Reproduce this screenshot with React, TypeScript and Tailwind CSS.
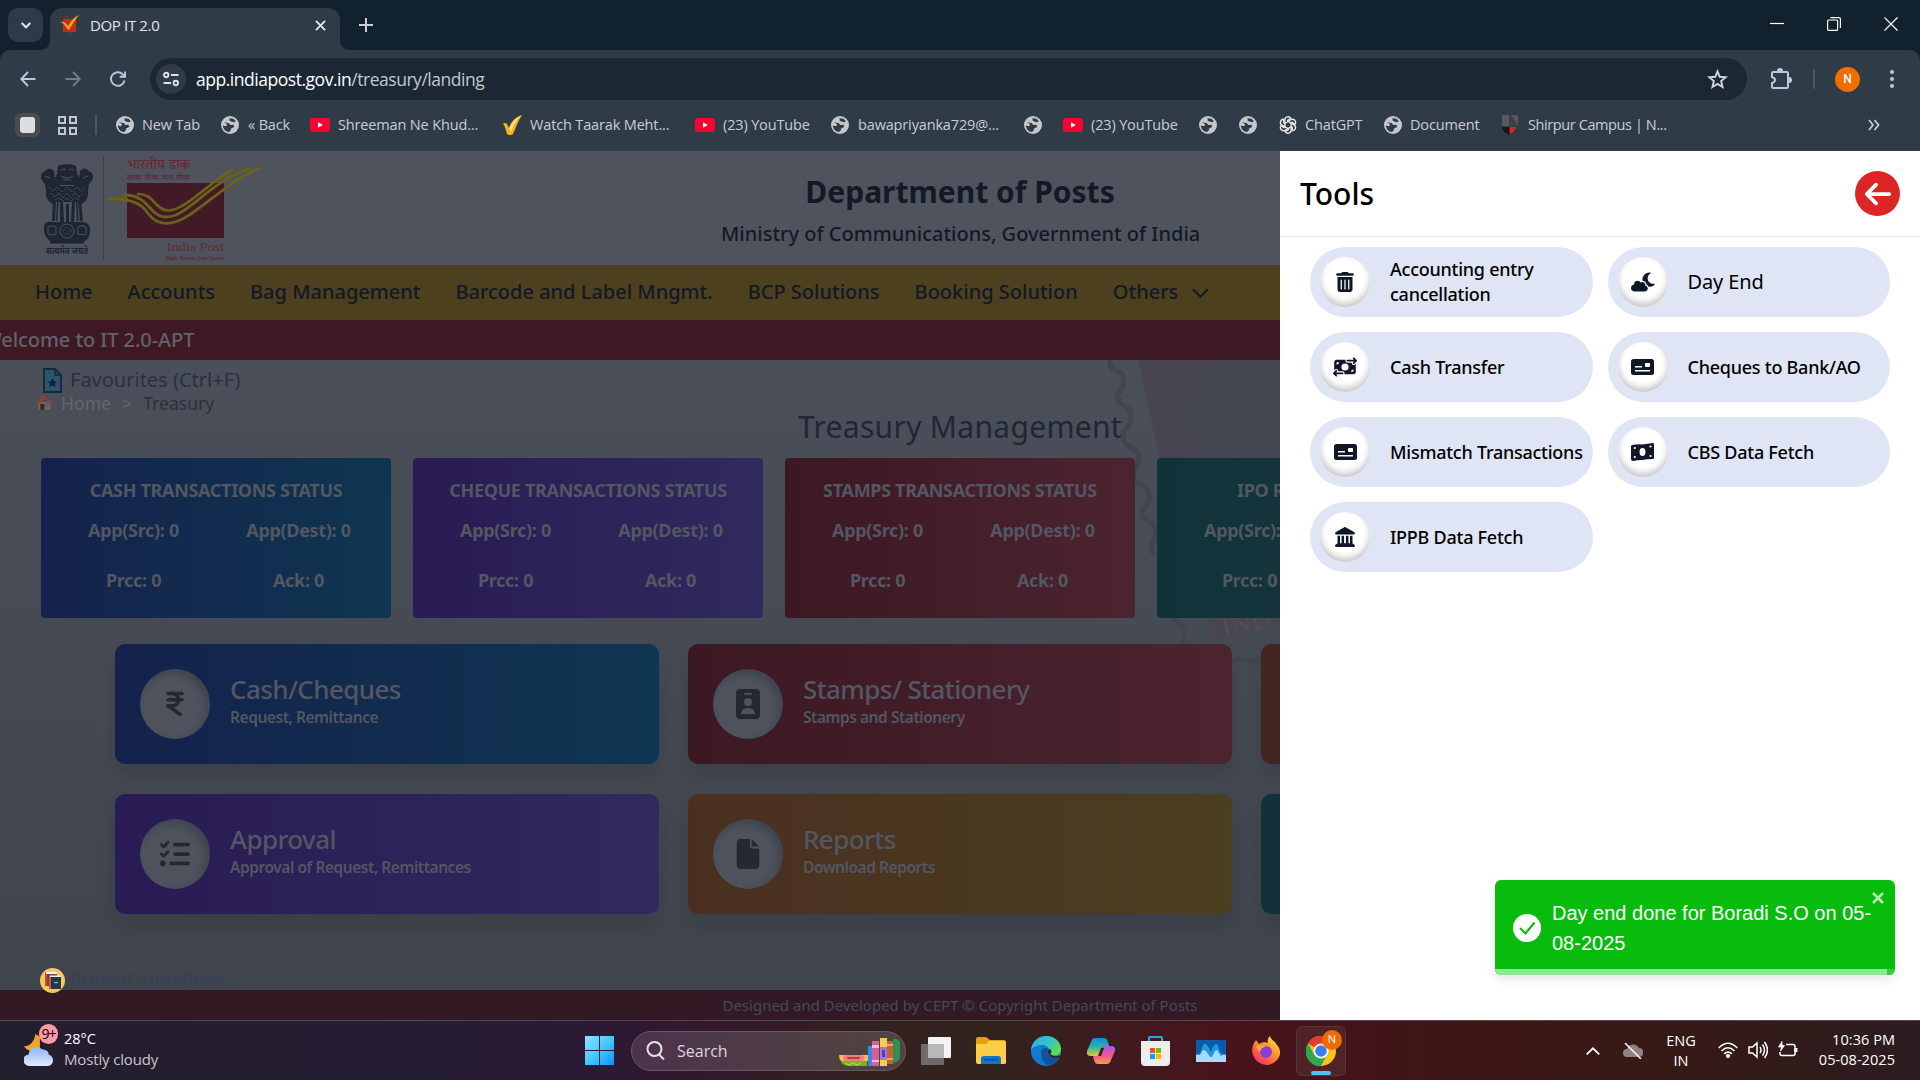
import React from "react";
import {
  FaTrashCan, FaCloudMoon, FaMoneyBillTransfer, FaLandmark, FaIndianRupeeSign,
  FaListCheck, FaFile, FaArrowLeft,
} from "react-icons/fa6";

const Globe = () => (
  <svg viewBox="0 0 18 18" className="h-[18px] w-[18px] shrink-0">
    <circle cx="9" cy="9" r="9" fill="#c4c7cb" />
    <path d="M3 6.500c2-.3 3 .4 4.800.6l1.500 1.800 3-.2 1 1.600-1.200 1.500-1.700.3-.6 2.200-1.700 1.700C4.500 16 2 13 1.900 9.500l2.600.8 1.500-1-.4-1.500z" fill="#303b48" />
    <path d="M8.500 2.200 12.500 2.800 14.800 5.300 12.800 6.300 10.200 5.600 8.600 4.500z" fill="#303b48" />
  </svg>
);

const YouTube = () => (
  <svg viewBox="0 0 20 14" className="h-[14px] w-5 shrink-0">
    <rect width="20" height="14" rx="3" fill="#ff0033" />
    <path d="M8 4.200v5.600L12.800 7z" fill="#fff" />
  </svg>
);

const ChatGpt = () => (
  <svg viewBox="0 0 24 24" className="h-[18px] w-[18px] shrink-0" fill="none" stroke="#e6e8ea" strokeWidth="1.800">
    {[0, 60, 120, 180, 240, 300].map((a) => (
      <path key={a} transform={`rotate(${a} 12 12)`} d="M12 7.200 7.800 9.600V5.200a4.200 4.200 0 0 1 7.900-2L11.500 5.700v3.100" />
    ))}
  </svg>
);

const Shield = () => (
  <svg viewBox="0 0 16 20" className="h-5 w-4 shrink-0">
    <path d="M0 0h7v11H0zM9 0h7v11z" fill="#59595c" />
    <path d="M7 0h2l7 11H7z" fill="#3b4149" />
    <path d="M0 12h8v8C3 18.500.5 16 0 12z" fill="#15181d" />
    <path d="M7.500 12H14c-.5 3.500-2.500 5.500-6.500 7z" fill="#d9202b" />
  </svg>
);

function Bookmarks() {
  const label = "whitespace-nowrap text-[14.500px] tracking-[-0.15px] text-[#c9cdd2]";
  return (
    <div className="flex h-[50px] items-center font-['Open_Sans','Noto_Sans',sans-serif]">
      <span className="ml-[15px] flex h-6 w-[25px] items-center justify-center rounded-md bg-[#4b4b4d]">
        <span className="h-4 w-[15px] rounded-[3px] bg-[#dcdde0]" />
      </span>
      <svg viewBox="0 0 19 19" className="ml-[18px] h-[19px] w-[19px]" fill="none" stroke="#c4c7cb" strokeWidth="2">
        <path d="M1 1h6v6H1zM12 1h6v6h-6zM1 12h6v6H1zM12 12h6v6H12z" />
      </svg>
      <span className="ml-[18px] h-5 w-[2px] bg-[#4a5866]" />
      <div className="ml-[19px] flex w-[105px] items-center gap-2"><Globe /><span className={label}>New Tab</span></div>
      <div className="flex w-[89px] items-center gap-[9px]"><Globe /><span className={label}>« Back</span></div>
      <div className="flex w-[193px] items-center gap-2"><YouTube /><span className={label}>Shreeman Ne Khud...</span></div>
      <div className="flex w-[192px] items-center gap-[7px]">
        <svg viewBox="0 0 20 20" className="h-5 w-5 shrink-0">
          <path d="M0 9c2-2 4-1 5 2l1 2C8 7 12 2 19 0c-4 6-6 12-9 19-2 2-5 1-6 0C3 15 2 11 0 9z" fill="#f8b319" />
          <path d="M6 14C9 7 13 3 19 0c-6 5-8 10-11 17z" fill="#ffe08a" />
        </svg>
        <span className={label}>Watch Taarak Meht...</span>
      </div>
      <div className="flex w-[136px] items-center gap-2"><YouTube /><span className={label}>(23) YouTube</span></div>
      <div className="flex w-[193px] items-center gap-[9px]"><Globe /><span className={label}>bawapriyanka729@...</span></div>
      <div className="flex w-[39px] items-center"><Globe /></div>
      <div className="flex w-[136px] items-center gap-2"><YouTube /><span className={label}>(23) YouTube</span></div>
      <div className="flex w-10 items-center"><Globe /></div>
      <div className="flex w-10 items-center"><Globe /></div>
      <div className="flex w-[105px] items-center gap-2"><ChatGpt /><span className={label}>ChatGPT</span></div>
      <div className="flex w-[118px] items-center gap-2"><Globe /><span className={label}>Document</span></div>
      <div className="flex w-[366px] items-center gap-[10px]"><Shield /><span className="whitespace-nowrap text-[14.500px] tracking-[-0.4px] text-[#c9cdd2]">Shirpur Campus | N...</span></div>
      <svg viewBox="0 0 12 12" className="h-3 w-3" fill="none" stroke="#c4c7cb" strokeWidth="1.800"><path d="m1 1 4 5-4 5M6.500 1l4 5-4 5" /></svg>
    </div>
  );
}

function Browser() {
  return (
    <header className="h-[151px] bg-[#12212e] font-['Open_Sans','Noto_Sans',sans-serif]">
      <div className="flex h-[50px] items-end">
        <span className="mb-2 ml-2 flex h-[34px] w-[35px] items-center justify-center rounded-[10px] bg-[#2e3a47]">
          <svg viewBox="0 0 10 7" className="h-[7px] w-[10px]" fill="none" stroke="#e3e6e9" strokeWidth="2"><path d="m.7 1 4.300 4.300L9.300 1" /></svg>
        </span>
        <svg viewBox="0 0 10 10" className="-ml-[3px] h-[10px] w-[10px]"><path d="M10 0v10H0C6 10 10 6 10 0" fill="#303b48" /></svg>
        <div className="flex h-[42px] w-[290px] items-center rounded-t-xl bg-[#303b48] pb-2 pl-[10px]">
          <svg viewBox="0 0 20 20" className="h-5 w-5">
            <path d="M3 4h13v13H3z" fill="#c22a22" />
            <path d="M3 1h6v1.500H3zM9 18h5v1.500H9z" fill="#7d2b30" />
            <path d="M0 7c4-1 6 1 8 4 3-5 6-9 11-11-4 5-7 10-10 15C6 14 5 8 0 7z" fill="#e8a317" />
          </svg>
          <span className="ml-[10px] w-[225px] text-[15px] tracking-[-0.350px] text-[#e3e6e9]">DOP IT 2.0</span>
          <svg viewBox="0 0 12 12" className="h-[11px] w-[11px]" stroke="#e3e6e9" strokeWidth="2"><path d="m1 1 10 10M11 1 1 11" /></svg>
        </div>
        <svg viewBox="0 0 10 10" className="h-[10px] w-[10px]"><path d="M0 0v10h10C4 10 0 6 0 0" fill="#303b48" /></svg>
        <svg viewBox="0 0 14 14" className="mb-[18px] ml-[9px] h-[14px] w-[14px]" stroke="#c9d0d8" strokeWidth="2"><path d="M7 0v14M0 7h14" /></svg>
        <div className="mb-[19px] ml-auto mr-[22px] flex items-center gap-[43px]">
          <svg viewBox="0 0 14 14" className="h-[14px] w-[14px]" stroke="#fff" strokeWidth="1.200"><path d="M0 6.500h14" /></svg>
          <svg viewBox="0 0 14 14" className="h-[14px] w-[14px]" stroke="#fff" strokeWidth="1.200" fill="none"><rect x=".6" y="3" width="10" height="10.400" rx="1" /><path d="M3.500.6h8.500q1.400 0 1.400 1.400v9" /></svg>
          <svg viewBox="0 0 14 14" className="h-[14px] w-[14px]" stroke="#fff" strokeWidth="1.200"><path d="m.5.500 13 13M13.500.5l-13 13" /></svg>
        </div>
      </div>
      <div className="h-[101px] rounded-t-[10px] bg-[#303b48]">
        <div className="flex h-[50px] items-center pt-2">
          <svg viewBox="0 0 16 16" className="ml-5 h-4 w-4" fill="none" stroke="#b9c8dc" strokeWidth="1.900"><path d="M15.500 8H1.500M8 1 1.300 8 8 15" /></svg>
          <svg viewBox="0 0 16 16" className="ml-[29px] h-4 w-4" fill="none" stroke="#727b86" strokeWidth="1.900"><path d="M.5 8h14M8 1l6.700 7L8 15" /></svg>
          <svg viewBox="0 0 16 16" className="ml-[29px] h-4 w-4" fill="none" stroke="#b9c8dc" strokeWidth="1.900"><path d="M14.500 9.500A6.800 6.800 0 1 1 12.800 3.300L15 5.500M15 .5v5.300H9.700" /></svg>
          <div className="ml-6 flex h-[42px] w-[1597px] items-center rounded-full bg-[#1b2733] pl-[6px]">
            <span className="flex h-[30px] w-[30px] items-center justify-center rounded-full bg-[#303b48]">
              <svg viewBox="0 0 16 16" className="h-4 w-4" fill="none" stroke="#dfe3e7" strokeWidth="1.900"><circle cx="3.200" cy="4" r="2.200" /><path d="M8 4h7.500M.5 12H8" /><circle cx="12.800" cy="12" r="2.200" /></svg>
            </span>
            <span className="ml-[10px] text-[17.500px] tracking-[-0.470px] text-white">app.indiapost.gov.in<span className="text-[#c2c7cc]">/treasury/landing</span></span>
            <svg viewBox="0 0 24 24" className="ml-auto mr-[18px] h-[23px] w-[23px]" fill="none" stroke="#cfd4d9" strokeWidth="2"><path d="m12 3.500 2.300 5.700 6.200.5-4.700 4 1.500 6.100-5.300-3.300-5.300 3.300 1.500-6.100-4.700-4 6.200-.5z" /></svg>
          </div>
          <svg viewBox="0 0 22 22" className="ml-[23px] h-[22px] w-[22px]" fill="none" stroke="#b9c8dc" strokeWidth="2"><path d="M3 4h14q1 0 1 1v14q0 1-1 1H3q-1 0-1-1v-4q3-1 3-3T2 9V5q0-1 1-1z" /><path d="M8 3a2 2 0 0 1 4 0M19 10a2 2 0 0 1 0 4" fill="#b9c8dc" /></svg>
          <span className="ml-[21px] h-5 w-[2px] rounded bg-[#4a5866]" />
          <span className="ml-5 flex h-[25px] w-[25px] items-center justify-center rounded-full bg-[#f06d00] text-[12px] font-medium text-white font-['Roboto',sans-serif]">N</span>
          <svg viewBox="0 0 4 18" className="ml-[30px] h-[18px] w-1" fill="#b9c8dc"><circle cx="2" cy="2" r="2" /><circle cx="2" cy="9" r="2" /><circle cx="2" cy="16" r="2" /></svg>
        </div>
        <Bookmarks />
      </div>
    </header>
  );
}

const Emblem = () => (
  <svg viewBox="0 0 54 92" className="ml-10 mt-1 h-[92px] w-[54px]" fill="#1f2531">
    <path d="M18 2q9-4 18 0l1 8 2 4-3 7H19l-4-7 2-4z" />
    <path d="M1 15Q0 9 5 7q5-5 9 0l1 7 5 8h14l5-8 1-7q5-5 9 0 5 2 4 8l-4 5-1 7q1 8-5 12l-7 4H18l-7-4q-6-4-5-12l-1-7z" />
    <path d="M13 38h28l2 20H11z" fill="#4e535e" />
    <path d="M13 35l3 1-1 21h-3zM17 38h1.500l-1 19H16zM20 38h3l1 20h-4zM26 40h3v18h-3zM32 38h3l-1 20h-3zM36 38h1.500l1 19H37zM38 36h3l2 21h-3z" />
    <path d="M4 62q1-5 8-4h30q7 0 8 6 1 9-5 13H10q-7-5-6-15z" />
    <path d="M10 76h34v3.500H10z" />
    <g fill="none" stroke="#4e535e" strokeWidth="1">
      <path d="M21 6q3-2 5 0m3 0q3-2 5 0M21 12q6 4 12 0M23 16h8M5 12l5 2m38-2-5 2" />
      <path d="M9 23l4 4 4-4 5 5 5-5 5 5 5-5 4 4 4-4M11 29l4 4 4-4 4 5 4-5 4 5 4-5 4 4 4-4M15 36l4-2 4 3 4-3 4 3 4-3 4 2" strokeDasharray="2 1" />
      <circle cx="27" cy="67" r="7" /><circle cx="27" cy="67" r="3.500" strokeDasharray="1 1" />
      <path d="M8 63q4-3 8 0v7q-4 2-8 0zM38 63q4-3 8 0v7q-4 2-8 0z" />
    </g>
    <text x="27" y="90" fontSize="9" fontWeight="700" textAnchor="middle" textLength="42" lengthAdjust="spacingAndGlyphs" fontFamily="Noto Sans Devanagari, Noto Sans, sans-serif">सत्यमेव जयते</text>
  </svg>
);

const PostLogo = () => (
  <svg viewBox="0 0 160 106" className="h-[106px] w-[160px]">
    <g fill="#632a38" fontFamily="Noto Serif Devanagari, Noto Sans Devanagari, serif">
      <text x="23" y="14" fontSize="15" fontWeight="500" textLength="63" lengthAdjust="spacingAndGlyphs">भारतीय डाक</text>
      <text x="23" y="25" fontSize="7" fontWeight="700" textLength="63" lengthAdjust="spacingAndGlyphs">डाक सेवा-जन सेवा</text>
    </g>
    <path d="M23 28h97v55H23z" fill="#421a27" />
    <g fill="none" stroke="#6b6219" strokeLinecap="round">
      <path d="M4 44C24 43 37 48 43 57s14 14 28 10C92 61 120 28 156 13" strokeWidth="2.800" />
      <path d="M20 40C34 40 40 46 47 54s14 10 25 6C90 52 110 26 146 13" strokeWidth="2.800" />
      <path d="M34 39c10 0 13 5 19 11s13 8 23 2C92 44 108 26 128 15" strokeWidth="2.600" />
    </g>
    <path d="M0 44q14-4 24-1v4q-12-2-24-3z" fill="#6b6219" />
    <g fill="#632a38" fontFamily="Liberation Serif, serif">
      <text x="63" y="96" fontSize="13.500" fontWeight="500" textLength="57" lengthAdjust="spacingAndGlyphs">India Post</text>
      <text x="62" y="105" fontSize="6" fontWeight="700" textLength="58" lengthAdjust="spacingAndGlyphs">Dak Sewa-Jan Sewa</text>
    </g>
  </svg>
);

const StampWatermark = () => (
  <svg viewBox="0 0 260 380" className="absolute left-[1020px] top-[209px] h-[380px] w-[260px]">
    <path d="M118 0H260V190H160z" fill="#474551" />
    <path d="M200 0h60v100h-65q-25-6-25-36-6-40 30-64z" fill="#444651" />
    <path d="M187 258l73-18v22l-68 20z" fill="#484650" />
    <text x="204" y="277" fontSize="28" fill="#514e59" transform="rotate(-14 204 277)" fontFamily="Liberation Serif, serif">IND</text>
    <path d="M90 0c-2 14 14 8 14 20S94 32 98 40s14 4 13 18-10 8-8 20 16 8 16 20-8 10-5 20 15 4 15 18-10 10-6 20 12 4 13 14-8 12-3 24M152 260c14 2 16 16 6 30M206 310c10-22 20-4 32-10 8-4 8-12 16-12" fill="none" stroke="#41454f" strokeWidth="5" />
    <path d="M-140 0q54 34 80 0" fill="none" stroke="#464b55" strokeWidth="4" />
  </svg>
);

const statCards = [
  { title: "CASH TRANSACTIONS STATUS", tone: "from-[#14224c] to-[#0e3551]" },
  { title: "CHEQUE TRANSACTIONS STATUS", tone: "from-[#291b54] to-[#302a5e]" },
  { title: "STAMPS TRANSACTIONS STATUS", tone: "from-[#3c1823] to-[#4b2430]" },
  { title: "IPO REQUESTS STATUS", tone: "from-[#12323a] to-[#12393a]" },
];

function StatCard({ title, tone }: { title: string; tone: string }) {
  return (
    <div className={`flex h-[160px] w-[350px] shrink-0 flex-col items-center rounded bg-gradient-to-r ${tone} pt-[19px] text-[18px] font-bold tracking-[-0.320px] text-[#525761]`}>
      <span className="h-[26px] leading-[26px]">{title}</span>
      <div className="mt-[2px] grid w-[330px] grid-cols-2 text-center leading-[50px]">
        <span>App(Src): 0</span><span>App(Dest): 0</span><span>Prcc: 0</span><span>Ack: 0</span>
      </div>
    </div>
  );
}

const Badge = () => (
  <svg viewBox="0 0 24 30" className="h-[30px] w-6"><rect width="24" height="30" rx="4" fill="#232833" /><g fill="#4e535e"><rect x="8" y="4" width="8" height="1.800" rx=".9" /><circle cx="12" cy="13" r="4" /><path d="M5 25q0-6 7-6t7 6z" /></g></svg>
);

function MenuCard({ title, sub, tone, icon }: { title?: string; sub?: string; tone: string; icon?: React.ReactNode }) {
  return (
    <div className={`flex h-[120px] w-[543.5px] shrink-0 items-center rounded-[10px] bg-gradient-to-r ${tone} pl-[25px] text-[#525761] shadow-[0_10px_15px_rgba(20,24,34,0.150)]`}>
      {title && (
        <>
          <span className="flex h-[70px] w-[70px] items-center justify-center rounded-full bg-[#4e535e] text-[#232833] shadow-[inset_-4px_4px_8px_rgba(20,24,34,0.280)]">{icon}</span>
          <div className="ml-5 -mt-2">
            <div className="text-[26px] leading-[34px] font-medium tracking-[-0.600px]">{title}</div>
            <div className="text-[15.500px] leading-[22px] font-semibold tracking-[-0.450px]">{sub}</div>
          </div>
        </>
      )}
    </div>
  );
}

function TreasuryPage() {
  return (
    <main className="relative h-[869px] w-[1280px] overflow-hidden bg-[#4e535e] text-[#131925] font-['Noto_Sans',sans-serif]">
      <div className="relative flex h-[114px] w-[1920px] items-center">
        <Emblem />
        <span className="ml-[9px] h-[104px] w-px bg-[#3c414b]" />
        <PostLogo />
        <div className="ml-[457px] mt-[6px] w-[478px] text-center">
          <h1 className="text-[30px] leading-9 font-bold whitespace-nowrap">Department of Posts</h1>
          <p className="mt-[10px] text-xl leading-7 font-medium whitespace-nowrap">Ministry of Communications, Government of India</p>
        </div>
      </div>
      <nav className="flex h-[55px] items-center gap-[35px] whitespace-nowrap bg-[#4c401f] pb-[2px] pl-[35px] text-xl font-medium">
        <span>Home</span><span>Accounts</span><span>Bag Management</span><span>Barcode and Label Mngmt.</span><span>BCP Solutions</span><span>Booking Solution</span>
        <span className="flex items-center gap-[14px]">Others
          <svg viewBox="0 0 18 10" className="mt-[3px] h-[10px] w-[17px]" fill="none" stroke="#131925" strokeWidth="2"><path d="m1 1 8 8 8-8" /></svg>
        </span>
      </nav>
      <div className="h-10 bg-[#3e1924]">
        <span className="-ml-[17px] text-xl leading-[39px] font-medium tracking-[-0.070px] whitespace-nowrap text-[#62616c]">Welcome to IT 2.0-APT</span>
      </div>
      <div className="h-[630px] bg-gradient-to-b from-[#4a4f59] to-[#3f444d]">
        <StampWatermark />
        <div className="relative flex h-[38px] items-center pl-[43px] pt-[2px] text-xl text-[#293142]">
          <svg viewBox="0 0 19 25" className="h-[25px] w-[19px]"><path d="M1 1h11l6 6v17H1z" fill="#2f536a" stroke="#102b3c" strokeWidth="1.800" /><path d="M12 1v6h6" fill="none" stroke="#102b3c" strokeWidth="1.500" /><path d="m9.500 10 1.400 3.300 3.600.2-2.800 2.300 1 3.500-3.200-2-3.200 2 1-3.500-2.800-2.300 3.600-.2z" fill="#0c2434" /></svg>
          <span className="ml-2">Favourites (Ctrl+F)</span>
        </div>
        <div className="relative -mt-[7px] flex h-6 items-center pl-9 text-[17.600px] text-[#62676f]">
          <svg viewBox="0 0 18 16" className="mr-2 h-4 w-[17px] shrink-0"><path d="M2.500 7h13v8.500h-13z" fill="#8a5f4c" /><path d="M3 1h3v5H3z" fill="#83463c" /><path d="M0 8.500 9 0l9 8.500-1.500 1.500L9 4l-7.500 6z" fill="#8f3f38" /><path d="M4.500 9h4.500v6.500H4.500z" fill="#352a33" /><circle cx="12.500" cy="10" r="2.300" fill="#2d6f9f" /><path d="M0 15h18v1H0z" fill="#3c5b48" /></svg>
          <span>Home</span><span className="mx-[11px]">&gt;</span><span className="text-[#2c323d]">Treasury</span>
        </div>
        <h2 className="relative mt-[-10px] w-[1920px] text-center text-[30px] leading-[44px] tracking-[0.300px] text-[#1f2737]">Treasury Management</h2>
        <div className="relative mt-[9px] flex gap-[22px] pl-[41px] whitespace-nowrap">
          {statCards.map((c) => <StatCard key={c.title} {...c} />)}
        </div>
        <div className="relative mt-[26px] flex gap-[29.5px] pl-[115px] whitespace-nowrap">
          <MenuCard title="Cash/Cheques" sub="Request, Remittance" tone="from-[#14224c] to-[#0e3551]" icon={<FaIndianRupeeSign size={28} />} />
          <MenuCard title="Stamps/ Stationery" sub="Stamps and Stationery" tone="from-[#3c1823] to-[#4b2430]" icon={<Badge />} />
          <MenuCard tone="from-[#432420] to-[#432420]" />
        </div>
        <div className="relative mt-[30px] flex gap-[29.5px] pl-[115px] whitespace-nowrap">
          <MenuCard title="Approval" sub="Approval of Request, Remittances" tone="from-[#291b54] to-[#302a5e]" icon={<FaListCheck size={30} />} />
          <MenuCard title="Reports" sub="Download Reports" tone="from-[#4a2f20] to-[#4a3f1f]" icon={<FaFile size={30} />} />
          <MenuCard tone="from-[#12323a] to-[#12323a]" />
        </div>
        <div className="relative z-10 mt-[54px] ml-10 flex h-[25px] items-center">
          <svg viewBox="0 0 25 25" className="h-[25px] w-[25px]"><circle cx="12.500" cy="12.500" r="12.500" fill="#f5ca5c" /><path d="M5 4h12v14H5z" fill="#c44a3c" /><path d="M7 6h10v12H7z" fill="#6c4a45" /><path d="M6 4h11v2H6z" fill="#f3f3f3" /><path d="M9 8h12v13H9z" fill="#23394b" /><path d="M9 8h2v13H9z" fill="#d9503f" /><path d="M10 7.500h11v1.500H10z" fill="#eee" /><path d="M14 14h4v1.200h-4z" fill="#9fb4c4" /></svg>
          <span className="ml-1 -mt-px text-xl text-[#374255]">Rules/Guidelines</span>
        </div>
      </div>
      <footer className="flex h-[30px] w-[1920px] items-center justify-center bg-[#321923] text-[15px] text-[#454958]">
        Designed and Developed by CEPT © Copyright Department of Posts
      </footer>
    </main>
  );
}

const Cheque = () => (
  <svg viewBox="0 0 23 16" className="h-4 w-[23px]"><rect width="23" height="16" rx="2.500" fill="#101828" /><g fill="#fff"><rect x="14" y="4" width="5" height="4" rx=".8" /><path d="M4 7h7v1.400H4zM4 11h15v1.400H4z" /></g></svg>
);
const Cash = () => (
  <svg viewBox="0 0 23 18" className="h-[18px] w-[23px]"><path d="M1 2Q6 1 11 1.500 17 .5 22 0q1 0 1 1v14q0 1-1 1-6 0-11 1-5 0-9 1-2 0-2-2V3z" fill="#101828" /><g fill="#fff"><ellipse cx="11.500" cy="9" rx="3" ry="4" /><circle cx="3.800" cy="5" r="1.100" /><circle cx="19.500" cy="3.500" r="1.100" /><circle cx="3.800" cy="14" r="1.100" /><circle cx="19.500" cy="13" r="1.100" /></g></svg>
);

const tools = [
  { text: "Accounting entry cancellation", icon: <FaTrashCan size={20} />, wrap: true },
  { text: "Day End", icon: <FaCloudMoon size={24} />, big: true },
  { text: "Cash Transfer", icon: <FaMoneyBillTransfer size={24} /> },
  { text: "Cheques to Bank/AO", icon: <Cheque /> },
  { text: "Mismatch Transactions", icon: <Cheque /> },
  { text: "CBS Data Fetch", icon: <Cash /> },
  { text: "IPPB Data Fetch", icon: <FaLandmark size={20} /> },
];

function ToolsDrawer() {
  return (
    <aside className="relative h-[869px] w-[640px] bg-white font-['Noto_Sans',sans-serif]">
      <div className="flex h-[86px] items-center justify-between border-b border-[#e5e7eb] pl-5 pr-5">
        <h2 className="text-[30px] font-medium text-black">Tools</h2>
        <span className="flex h-[45px] w-[45px] items-center justify-center rounded-full bg-[#dc2626] text-white"><FaArrowLeft size={30} /></span>
      </div>
      <div className="grid grid-cols-[282.500px_282.500px] gap-[15px] pl-[30px] pt-[10px]">
        {tools.map((t) => (
          <div key={t.text} className="flex h-[70px] items-center rounded-full bg-[#dfe5f5] pl-[10px]">
            <span className="flex h-[50px] w-[50px] shrink-0 items-center justify-center rounded-full bg-white text-[#101828] shadow-[inset_0_-4px_6px_rgba(0,0,0,0.220)]">{t.icon}</span>
            <span className={`ml-5 text-black ${t.wrap ? "w-[160px]" : "whitespace-nowrap"} ${t.big ? "text-xl tracking-[-0.100px]" : "text-[18px] leading-[25px] font-medium tracking-[-0.250px]"}`}>{t.text}</span>
          </div>
        ))}
      </div>
      <div className="absolute left-[215px] top-[729px] h-[95px] w-[400px] overflow-hidden rounded-md bg-[#07bc0c] shadow-[0_4px_12px_rgba(0,0,0,0.100)]">
        <div className="flex h-[95px] items-center pl-[18px]">
          <svg viewBox="0 0 28 28" className="h-7 w-7 shrink-0"><circle cx="14" cy="14" r="14" fill="#fff" /><path d="m7 14 5.500 5.500L21.500 8.500" fill="none" stroke="#07bc0c" strokeWidth="2" /></svg>
          <p className="ml-[11px] w-[325px] text-xl leading-[30px] text-white font-['Liberation_Sans',Arial,sans-serif]">Day end done for Boradi S.O on 05-<br />08-2025</p>
        </div>
        <svg viewBox="0 0 12 12" className="absolute right-[11px] top-3 h-3 w-3" stroke="#b4ecb6" strokeWidth="2.500"><path d="m1 1 10 10M11 1 1 11" /></svg>
        <div className="absolute inset-x-0 bottom-0 h-[6px] bg-[#38cc3c]"><div className="h-[6px] w-[392px] bg-[#8fe792]" /></div>
      </div>
    </aside>
  );
}

const Cell = ({ children }: { children: React.ReactNode }) => <span className="flex w-[55px] items-center justify-center">{children}</span>;

function Taskbar() {
  return (
    <footer className="flex h-[60px] items-center border-t border-[#57484f] bg-[linear-gradient(90deg,#231e2e_0%,#241d32_22%,#2a1936_30%,#34182c_37%,#33211f_45%,#33231e_52%,#3f1a1e_58%,#48131d_64%,#3f1615_75%,#361a15_87%,#2c1c20_100%)] font-['Open_Sans','Noto_Sans',sans-serif] text-[14.500px] text-white">
      <div className="flex w-[560px] items-center pl-6">
        <div className="relative h-9 w-[30px]">
          <svg viewBox="0 0 34 38" className="h-[34px] w-[30px]">
            <defs><linearGradient id="cloud" x1="0" y1="0" x2="0" y2="1"><stop offset="0" stopColor="#8db5f8" /><stop offset="1" stopColor="#e0e9fb" /></linearGradient></defs>
            <path d="M13 1c-1 8-6 14-13 14 3 5 12 8 18 2V4z" fill="#f5a524" />
            <path d="M6 37a6.500 6.500 0 0 1-.5-13A8.500 8.500 0 0 1 20 18q8 1 8 6 5 2 5 7-1 6-6 6z" fill="url(#cloud)" />
          </svg>
          <span className="absolute -top-[9px] left-[15px] flex h-5 w-[19px] items-center justify-center rounded-full bg-[#ff99a4] text-[14px] tracking-[-1px] text-black">9+</span>
        </div>
        <div className="-mt-[3px] ml-[10px] leading-5">
          <div>28°C</div>
          <div className="text-[15px] tracking-[-0.150px] text-[#c9c6cc]">Mostly cloudy</div>
        </div>
      </div>
      <svg viewBox="0 0 29 29" className="ml-[25px] h-[29px] w-[29px]">
        <defs><linearGradient id="win" x1="0" y1="0" x2="29" y2="29" gradientUnits="userSpaceOnUse"><stop offset="0" stopColor="#8fe3ff" /><stop offset=".5" stopColor="#46c8fc" /><stop offset="1" stopColor="#0a93fa" /></linearGradient></defs>
        <path d="M0 0h14v14H0zM15 0h14v14H15zM0 15h14v14H0zM15 15h14v14H15z" fill="url(#win)" />
      </svg>
      <div className="ml-[17px] flex h-10 w-[275px] items-center rounded-full border border-[#6b5763] bg-gradient-to-r from-[#4c334c] to-[#51443f] pl-[14px] pr-1">
        <svg viewBox="0 0 19 19" className="h-[19px] w-[19px]" fill="none" stroke="#e6e1e6" strokeWidth="2"><circle cx="8.500" cy="8" r="7" /><path d="m13 13.500 5 5" /></svg>
        <span className="ml-[12px] text-base text-[#dcd6dc]">Search</span>
        <svg viewBox="0 0 62 29" className="ml-auto mt-1 h-[29px] w-[62px]">
          <path d="M2 23h26v5H9q-6-1-7-5z" fill="#7cb518" /><path d="M6 25l4 2 4-2 4 2 4-2" stroke="#b6dd4a" fill="none" /><path d="M0 17h29v6H2q-2-2-2-6z" fill="#f3c04c" /><rect x="4" y="17" width="21" height="6" rx="3" fill="#ef7f7c" /><rect x="8" y="19" width="13" height="2" rx="1" fill="#a9443f" />
          <path d="M29 8h4v20h-4z" fill="#3b82f6" /><path d="M33 3h7v25h-7z" fill="#d65f94" /><path d="M33 7h7v3h-7zM33 22h7v2h-7z" fill="#f7b8cf" /><path d="M41 0h7v28h-7z" fill="#9b7be0" /><path d="M41 0h7v9h-7zM41 22h7v6h-7z" fill="#f6cf50" /><path d="M43 12h3v7h-3z" fill="#5a3fa8" /><path d="M48 3h6v23h-6z" fill="#c4632d" /><path d="M48 6h6v2h-6zM48 20h6v2h-6z" fill="#efa55a" /><path d="M54 1q5-1 7 3v17q-2 3-7 4z" fill="#2f8f57" />
        </svg>
      </div>
      <div className="ml-[2px] flex h-[50px]">
        <Cell><svg viewBox="0 0 30 28" className="h-7 w-[30px]"><rect x="7" width="23" height="21" rx="1" fill="#f3f3f3" /><rect y="7" width="23" height="21" rx="1" fill="#6f6b6a" /><path d="M7 7h16v14H7z" fill="#b9b7b7" /></svg></Cell>
        <Cell><svg viewBox="0 0 30 27" className="h-[27px] w-[30px]"><path d="M0 2q0-2 2-2h8l4 3h14q2 0 2 2v10H0z" fill="#e2a20c" /><path d="M0 7h10l3-3h15q2 0 2 2v20q0 1-2 1H2q-2 0-2-2z" fill="#ffce48" /><path d="M5 27v-5q0-3 3-3h14q3 0 3 3v5z" fill="#1276c8" /><path d="M8 22h14v1.500H8z" fill="#0b4f94" /></svg></Cell>
        <Cell><svg viewBox="0 0 30 30" className="h-[30px] w-[30px]">
          <defs><linearGradient id="edge" x1="0" y1="0" x2="1" y2=".6"><stop offset="0" stopColor="#2aa9ea" /><stop offset=".6" stopColor="#35c5c4" /><stop offset="1" stopColor="#63dc4c" /></linearGradient></defs>
          <circle cx="15" cy="15" r="15" fill="#0f7bd2" /><path d="M0 14C1 5 8 0 15 0c9 0 15 6 15 13 0 5-4 7-8 7-3 0-5-1-5-3 2-1 2-7-5-8-6 0-10 2-12 5z" fill="url(#edge)" /><path d="M10 17c0-5 5-6 8-4-3 3-1 7 4 8 3 0 5-1 7-2-2 7-8 10-12 10-4-1-7-6-7-12z" fill="#14519b" /><path d="M17 17q-1-3 2-4 3 3 0 5 4 3 11 1.500l-2 2q-9 1.500-11-4.500z" fill="#3a2421" />
        </svg></Cell>
        <Cell><svg viewBox="0 0 28 26" className="h-[26px] w-7">
          <defs><linearGradient id="cpa" x1="0" y1="0" x2="0" y2="1"><stop offset="0" stopColor="#1787e0" /><stop offset=".5" stopColor="#26b8a5" /><stop offset="1" stopColor="#f0c530" /></linearGradient><linearGradient id="cpb" x1="0" y1="0" x2="0" y2="1"><stop offset="0" stopColor="#a35bea" /><stop offset=".5" stopColor="#ee5590" /><stop offset="1" stopColor="#fb9850" /></linearGradient></defs>
          <path d="M8 0h9q3 0 4 4l1 4h-4q-3 0-4 4l-2 6H4q-5 0-4-5L4 4q1-4 4-4z" fill="url(#cpa)" /><path d="M20 26h-9q-3 0-4-4l-1-4h4q3 0 4-4l2-6h8q5 0 4 5l-4 9q-1 4-4 4z" fill="url(#cpb)" /><path d="M14 10h3l-3 8h-3z" fill="#3a1c20" />
        </svg></Cell>
        <Cell><svg viewBox="0 0 29 30" className="h-[30px] w-[29px]"><path d="M8 6V2q0-1 1-1h11q1 0 1 1v4" fill="none" stroke="#27a8e0" strokeWidth="2" /><path d="M0 5h29v21q0 4-4 4H4q-4 0-4-4z" fill="#ededed" /><path d="M9 12h5v5H9z" fill="#f25022" /><path d="M15 12h5v5h-5z" fill="#7fba00" /><path d="M9 18h5v5H9z" fill="#00a4ef" /><path d="M15 18h5v5h-5z" fill="#ffb900" /></svg></Cell>
        <Cell><svg viewBox="0 0 30 22" className="h-[22px] w-[30px]"><path d="M0 0h30v22H0z" fill="#0c5aa8" /><path d="M0 14h2q2 0 4-6t4-4 5 8q3-8 5-8t3 5 4 5h3v8H0z" fill="#2499dd" /><path d="M0 15h4l3-5 3 1 4 6h2l3-6 2-1 4 6 2-1h3v7H0z" fill="#a6dcfb" /></svg></Cell>
        <Cell><svg viewBox="0 0 28 29" className="h-[29px] w-7">
          <defs><linearGradient id="ff" x1="1" y1="0" x2=".2" y2="1"><stop offset="0" stopColor="#fff14b" /><stop offset=".45" stopColor="#ff9a2b" /><stop offset="1" stopColor="#f5265f" /></linearGradient></defs>
          <path d="M18 0c1 4 4 4 7 9 3 3 4 8 2 12a14 14 0 0 1-26-2C-1 13 1 8 4 4l3 4c3-2 7-2 9-1-1-3 0-5 2-7z" fill="url(#ff)" /><circle cx="14" cy="16" r="6" fill="#8a3fd6" /><path d="M4 10q6-2 10 1-5 0-6 5-3-2-4-6z" fill="#ffab33" />
        </svg></Cell>
        <span className="relative ml-[3px] flex h-[50px] w-[50px] items-center justify-center rounded-md border border-[#593335] bg-[#4f2328]">
          <svg viewBox="0 0 30 30" className="h-[30px] w-[30px]"><circle cx="15" cy="15" r="15" fill="#fbc116" /><path d="M15 15 2 7.500a15 15 0 0 1 26 0z" fill="#e33b2e" /><path d="M2 7.500 8.500 19 15 22.500 11 30A15 15 0 0 1 2 7.500z" fill="#2da94f" /><path d="M21 18.500 15 30q-4 0-6-1l6-9z" fill="#2da94f" /><circle cx="15" cy="15" r="7.500" fill="#fff" /><circle cx="15" cy="15" r="5.800" fill="#3b7ded" /></svg>
          <span className="absolute right-[3px] top-[3px] flex h-5 w-5 items-center justify-center rounded-full bg-[#ee6a02] text-[11px] font-medium">N</span>
          <span className="absolute bottom-0 left-[14px] h-1 w-5 rounded-full bg-[#4cc2ff]" />
        </span>
      </div>
      <svg viewBox="0 0 14 8" className="ml-auto h-2 w-[14px]" fill="none" stroke="#fff" strokeWidth="1.800"><path d="m.7 7.300 6.300-6 6.300 6" /></svg>
      <svg viewBox="0 0 20 16" className="ml-[23px] h-4 w-5"><path d="M4 14a4 4 0 0 1 0-8 6.500 6.500 0 0 1 12-1 4.500 4.500 0 0 1 0 9z" fill="#918383" /><path d="m2 0 16 16" stroke="#fff" strokeWidth="1.500" /></svg>
      <div className="ml-[22px] w-8 text-center leading-5"><div>ENG</div><div>IN</div></div>
      <svg viewBox="0 0 20 16" className="-mt-[2px] ml-[21px] h-4 w-5" fill="none" stroke="#fff" strokeWidth="1.600"><path d="M.7 6q9.300-9.500 18.600 0M3.500 9q6.500-6.500 13 0M6.300 11.800q3.700-3.500 7.400 0" /><circle cx="10" cy="14" r="1.300" fill="#fff" /></svg>
      <svg viewBox="0 0 20 18" className="-mt-[2px] ml-[10px] h-[18px] w-5" fill="none" stroke="#fff" strokeWidth="1.500"><path d="M1 6h3.500L9 2v14l-4.500-4H1zM12 6q2 3 0 6M14.500 3.500q4 5.500 0 11M16.500 1q6 8 0 16" /></svg>
      <svg viewBox="0 0 20 17" className="-mt-[3px] ml-[10px] mr-[15px] h-[17px] w-5" fill="none" stroke="#fff" strokeWidth="1.500"><path d="M8 3.500h7q2 0 2 2v7q0 2-2 2H4q-2 0-2-2V11" /><path d="M18 7v4" strokeWidth="3" /><path d="M4 .5.500 6h3L2.500 10 6.500 4.500H4z" fill="#fff" strokeWidth=".8" /></svg>
      <div className="-mt-[2px] mr-[25px] w-[82px] text-right text-[14.500px] leading-5 tracking-[0.050px] whitespace-nowrap"><div>10:36 PM</div><div>05-08-2025</div></div>
    </footer>
  );
}

export default function App() {
  return (
    <div className="h-[1080px] w-[1920px] overflow-hidden">
      <Browser />
      <div className="flex"><TreasuryPage /><ToolsDrawer /></div>
      <Taskbar />
    </div>
  );
}
